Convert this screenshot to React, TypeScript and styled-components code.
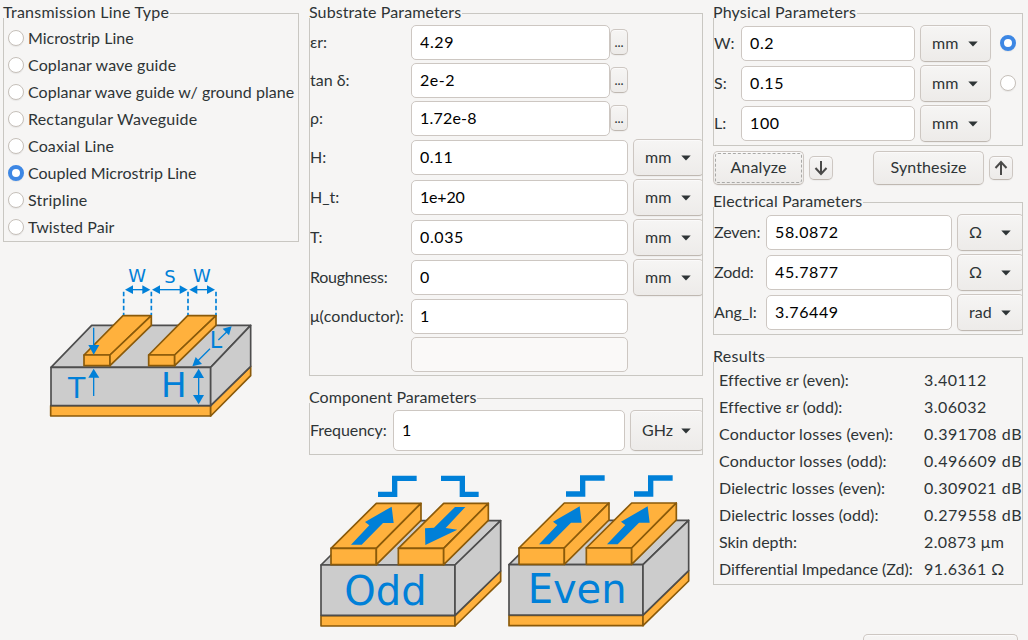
import React from "react";
import styled, { createGlobalStyle, css } from "styled-components";

const Global = createGlobalStyle`
  * { box-sizing: border-box; }
  body {
    margin: 0;
    overflow: hidden;
    background: #f6f5f4;
    color: #2e3436;
    font: 16px/20px Lato, "Noto Sans", sans-serif;
  }
`;

const Page = styled.main`
  display: flex;
  gap: 10px;
  width: 1028px;
  height: 640px;
  padding: 13px 5px 0 3px;
  overflow: hidden;
`;

const Column = styled.div<{ $width: number }>`
  display: flex;
  flex-direction: column;
  flex: none;
  width: ${(p) => p.$width}px;
`;

const Frame = styled.section<{ $height: number; $top?: number }>`
  position: relative;
  flex: none;
  height: ${(p) => p.$height}px;
  margin-top: ${(p) => p.$top ?? 0}px;
  border: 1px solid #c9c7c2;
`;

const FrameTitle = styled.h2<{ $track?: number }>`
  position: absolute;
  top: -12px;
  left: -1px;
  height: 16px;
  margin: 0;
  padding-right: 1px;
  background: #f6f5f4;
  font-size: 16px;
  font-weight: 400;
  line-height: 20px;
  white-space: nowrap;
  letter-spacing: ${(p) => p.$track ?? 0}px;
`;

const FrameBody = styled.div<{ $top?: number }>`
  height: 100%;
  padding-top: ${(p) => p.$top ?? 10}px;
  overflow: hidden;
`;

const Text = styled.span<{ $width?: number; $track?: number }>`
  flex: none;
  width: ${(p) => (p.$width ? `${p.$width}px` : "auto")};
  white-space: nowrap;
  letter-spacing: ${(p) => p.$track ?? 0}px;
`;

const RadioRow = styled.label`
  display: flex;
  align-items: center;
  gap: 4px;
  height: 27px;
  padding-left: 4px;
`;

const Radio = styled.span<{ $on?: boolean }>`
  flex: none;
  width: 16px;
  height: 16px;
  border: 1px solid #c6c0ba;
  border-radius: 50%;
  background: #fff;
  box-shadow: 0 1px 1px rgba(0, 0, 0, 0.06);
  ${(p) =>
    p.$on &&
    css`
      border: 4px solid #3d87e4;
    `}
`;

const FieldRow = styled.div<{ $height: number }>`
  display: flex;
  align-items: center;
  height: ${(p) => p.$height}px;
  padding-bottom: 1px;
  & > ${Text} {
    padding-bottom: 2px;
  }
  & > ${Radio} {
    margin-top: -2px;
  }
`;

const Field = styled.input<{ $width: number; $height?: number; $track?: number }>`
  flex: none;
  width: ${(p) => p.$width}px;
  height: ${(p) => p.$height ?? 35}px;
  padding: 0 8px 2px;
  border: 1px solid #cdc7c2;
  border-radius: 5px;
  outline: none;
  background: #fff;
  color: #000;
  font: inherit;
  letter-spacing: ${(p) => p.$track ?? 0.6}px;
  &:disabled {
    background: #faf9f8;
  }
`;

const raised = css`
  flex: none;
  padding: 0 0 2px;
  border: 1px solid #cdc7c2;
  border-bottom-color: #bfb8b1;
  border-radius: 5px;
  background: linear-gradient(#f6f5f4, #edebe9);
  box-shadow: inset 0 1px #fbfafa, 0 1px 1px rgba(0, 0, 0, 0.04);
  color: #2e3436;
  font: inherit;
`;

const Combo = styled.button<{ $width: number; $height?: number }>`
  ${raised}
  display: flex;
  align-items: center;
  justify-content: space-between;
  width: ${(p) => p.$width}px;
  height: ${(p) => p.$height ?? 37}px;
  margin-left: 5px;
  padding: 0 12px 0 11px;
  & > span {
    padding-bottom: 2px;
  }
`;

const Dots = styled.button`
  ${raised}
  width: 18px;
  height: 26px;
  margin-top: -1px;
  padding: 0;
  font-size: 13px;
`;

const PushButton = styled.button<{ $width: number }>`
  ${raised}
  position: relative;
  width: ${(p) => p.$width}px;
  height: 34px;
  letter-spacing: 0.12px;
`;

const FocusRing = styled.span`
  position: absolute;
  inset: 1px;
  border: 1px dashed #a9a9a7;
  border-radius: 3px;
`;

const IconButton = styled.button`
  ${raised}
  display: grid;
  place-items: center;
  width: 24px;
  height: 24px;
  margin-left: 5px;
  padding: 0;
`;

const Actions = styled.div`
  display: flex;
  align-items: center;
  height: 34px;
  margin-top: 5px;
`;

const Gap = styled.span<{ $width: number }>`
  flex: none;
  width: ${(p) => p.$width}px;
`;

const ResultRow = styled.div`
  display: flex;
  align-items: center;
  height: 27px;
  padding-left: 5px;
`;

const CloseButton = styled.button`
  ${raised}
  width: 155px;
  height: 34px;
  margin: 49px 0 0 150px;
`;

const DrawingBox = styled.svg<{ $left: number; $top: number }>`
  display: block;
  flex: none;
  margin: ${(p) => p.$top}px 0 0 ${(p) => p.$left}px;
  overflow: visible;
  font-family: "DejaVu Sans", sans-serif;
`;

const Caret = () => (
  <svg width="10" height="6" viewBox="0 0 10 6">
    <path d="M0.3 0.6H9.7L5 5.6Z" fill="#2e3436" />
  </svg>
);

const Arrow = ({ up }: { up?: boolean }) => (
  <svg width="14" height="16" viewBox="0 0 14 16" fill="none" stroke="#4a4a49" strokeWidth="2">
    {up ? <path d="M7 15V2M1.5 8L7 2L12.5 8" /> : <path d="M7 1V14M1.5 8L7 14L12.5 8" />}
  </svg>
);

const Unit = ({ name, width = 71, height }: { name: string; width?: number; height?: number }) => (
  <Combo $width={width} $height={height}>
    <span>{name}</span>
    <Caret />
  </Combo>
);

const BLUE = "#0080d8";
const ORANGE = "#ffb13d";
const BROWN = "#8a5a0a";
const GRAY = "#cccccc";
const DARK = "#4d4d4d";

const Arrowed = ({ d, heads }: { d: string; heads: string[] }) => (
  <g>
    <path d={d} stroke={BLUE} strokeWidth="4" fill="none" />
    {heads.map((h) => (
      <path key={h} d={h} fill={BLUE} />
    ))}
  </g>
);

const LineDrawing = () => (
  <DrawingBox $left={37} $top={13} width="220" height="170" viewBox="0 0 660 510">
    <g stroke={BROWN} strokeWidth="5" fill={ORANGE} strokeLinejoin="round">
      <path d="M32 452H512V483H32Z" />
      <path d="M512 452L632 334V362L512 483Z" />
    </g>
    <g stroke={DARK} strokeWidth="5" fill={GRAY} strokeLinejoin="round">
      <path d="M33 337L155 211H632L512 337Z" />
      <path d="M33 337H512V452H33Z" />
      <path d="M512 337L632 211V334L512 452Z" />
    </g>
    {[0, 194].map((x) => (
      <g key={x} transform={`translate(${x} 0)`} stroke={BROWN} strokeWidth="5" fill={ORANGE} strokeLinejoin="round">
        <path d="M132 300L249 182H334L210 300Z" />
        <path d="M132 300H210V332H132Z" />
        <path d="M210 300L334 182V211L210 332Z" />
      </g>
    ))}
    <g stroke={BLUE} strokeWidth="5" strokeDasharray="14 7">
      <path d="M251 110V180M334 110V180M444 110V180M528 110V180" />
    </g>
    <Arrowed d="M270 104H315" heads={["M255 104L279 91V117Z", "M331 104L307 91V117Z"]} />
    <Arrowed d="M350 104H430" heads={["M336 104L360 91V117Z", "M443 104L419 91V117Z"]} />
    <Arrowed d="M460 104H510" heads={["M448 104L472 91V117Z", "M525 104L501 91V117Z"]} />
    <Arrowed d="M161 218V275" heads={["M161 299L145 270H178Z"]} />
    <Arrowed d="M161 423V360" heads={["M161 341L145 368H178Z"]} />
    <Arrowed d="M476 360V430" heads={["M476 341L459 369H492Z", "M476 448L459 420H492Z"]} />
    <Arrowed d="M535 255L563 228M510 281L473 318" heads={["M575 214L548 221L567 241Z", "M457 334L467 306L486 327Z"]} />
    <g fill={BLUE}>
      <text x="265" y="82" fontSize="54">W</text>
      <text x="373" y="85" fontSize="54">S</text>
      <text x="459" y="82" fontSize="54">W</text>
      <text x="84" y="429" fontSize="85">T</text>
      <text x="363" y="427" fontSize="102">H</text>
      <text x="509" y="279" fontSize="67">L</text>
    </g>
  </DrawingBox>
);

const UP_ARROW = "M123 239L178 181L165 171L245 125L251 174L219 174L155 239Z";
const DOWN_ARROW = "M466 126L407 189L442 194L346 240L345 190L372 188L435 126Z";
const STEP_UP = "M204 88H254V40H320";

const ModeBlock = ({ odd }: { odd?: boolean }) => (
  <g>
    <g stroke={BROWN} strokeWidth="5" fill={ORANGE} strokeLinejoin="round">
      <path d="M33 452H435V483H33Z" />
      <path d="M435 452L572 318V349L435 483Z" />
    </g>
    <g stroke={DARK} strokeWidth="5" fill={GRAY} strokeLinejoin="round">
      <path d="M33 300L167 167H572L435 300Z" />
      <path d="M33 300H435V451H33Z" />
      <path d="M435 300L572 167V318L435 451Z" />
    </g>
    {[0, 202].map((x) => (
      <g key={x} transform={`translate(${x} 0)`} stroke={BROWN} strokeWidth="5" fill={ORANGE} strokeLinejoin="round">
        <path d="M63 250L199 115H333L199 250Z" />
        <path d="M63 250H199V299H63Z" />
        <path d="M199 250L333 115V166L199 299Z" />
      </g>
    ))}
    <path d={UP_ARROW} fill={BLUE} />
    <g fill="none" stroke={BLUE} strokeWidth="16">
      <path d={STEP_UP} />
      {odd ? <path d="M393 40H457V88H506" /> : <path d={STEP_UP} transform="translate(204 0)" />}
    </g>
    {odd ? <path d={DOWN_ARROW} fill={BLUE} /> : <path d={UP_ARROW} transform="translate(204 0)" fill={BLUE} />}
    <text x={odd ? 103 : 89} y={odd ? 421 : 414} fontSize="120" fill={BLUE}>
      {odd ? "Odd" : "Even"}
    </text>
  </g>
);

const ModeDrawing = () => (
  <DrawingBox $left={1} $top={10} width="390" height="170" viewBox="0 0 1170 510">
    <ModeBlock odd />
    <g transform="translate(564 -1)">
      <ModeBlock />
    </g>
  </DrawingBox>
);

const lineTypes: [string, number][] = [
  ["Microstrip Line", 0],
  ["Coplanar wave guide", 0.13],
  ["Coplanar wave guide w/ ground plane", 0.04],
  ["Rectangular Waveguide", 0.21],
  ["Coaxial Line", 0.13],
  ["Coupled Microstrip Line", 0],
  ["Stripline", 0.2],
  ["Twisted Pair", 0.08],
];

const substrate: {
  label: string;
  value: string;
  kind: "dots" | "unit" | "plain";
  track?: number;
  valueTrack?: number;
}[] = [
  { label: "εr:", value: "4.29", kind: "dots" },
  { label: "tan δ:", value: "2e-2", kind: "dots", valueTrack: 0.5 },
  { label: "ρ:", value: "1.72e-8", kind: "dots", valueTrack: 0.2 },
  { label: "H:", value: "0.11", kind: "unit", valueTrack: 0.4 },
  { label: "H_t:", value: "1e+20", kind: "unit", valueTrack: -0.2 },
  { label: "T:", value: "0.035", kind: "unit" },
  { label: "Roughness:", value: "0", kind: "unit", track: -0.25 },
  { label: "μ(conductor):", value: "1", kind: "plain" },
  { label: "", value: "", kind: "plain" },
];

const physical = [
  ["W:", "0.2"],
  ["S:", "0.15"],
  ["L:", "100"],
];

const electrical = [
  ["Zeven:", "58.0872", "Ω"],
  ["Zodd:", "45.7877", "Ω"],
  ["Ang_l:", "3.76449", "rad"],
];

const results: [string, string, number, number][] = [
  ["Effective εr (even):", "3.40112", 0.07, 0.48],
  ["Effective εr (odd):", "3.06032", 0.07, 0.48],
  ["Conductor losses (even):", "0.391708 dB", 0.17, 0.55],
  ["Conductor losses (odd):", "0.496609 dB", 0.18, 0.55],
  ["Dielectric losses (even):", "0.309021 dB", 0.13, 0.55],
  ["Dielectric losses (odd):", "0.279558 dB", 0.13, 0.55],
  ["Skin depth:", "2.0873 μm", -0.05, 0.35],
  ["Differential Impedance (Zd):", "91.6361 Ω", -0.05, 0.45],
];

export default function App() {
  return (
    <Page>
      <Global />
      <Column $width={296}>
        <Frame $height={229}>
          <FrameTitle $track={0.25}>Transmission Line Type</FrameTitle>
          <FrameBody>
            {lineTypes.map(([name, track]) => (
              <RadioRow key={name}>
                <Radio $on={name === "Coupled Microstrip Line"} />
                <Text $track={track}>{name}</Text>
              </RadioRow>
            ))}
          </FrameBody>
        </Frame>
        <LineDrawing />
      </Column>

      <Column $width={394}>
        <Frame $height={363}>
          <FrameTitle $track={0.1}>Substrate Parameters</FrameTitle>
          <FrameBody>
            {substrate.map((row) => (
              <FieldRow key={row.label} $height={row.kind === "unit" ? 40 : 38}>
                <Text $width={101} $track={row.track}>{row.label}</Text>
                <Field
                  $width={row.kind === "dots" ? 199 : 217}
                  $track={row.valueTrack}
                  defaultValue={row.value}
                  disabled={!row.label}
                />
                {row.kind === "dots" && <Dots>...</Dots>}
                {row.kind === "unit" && <Unit name="mm" />}
              </FieldRow>
            ))}
          </FrameBody>
        </Frame>
        <Frame $height={57} $top={22}>
          <FrameTitle $track={0.06}>Component Parameters</FrameTitle>
          <FrameBody>
            <FieldRow $height={44}>
              <Text $width={83} $track={-0.08}>Frequency:</Text>
              <Field $width={232} $height={41} defaultValue="1" />
              <Unit name="GHz" width={74} height={41} />
            </FieldRow>
          </FrameBody>
        </Frame>
        <ModeDrawing />
      </Column>

      <Column $width={310}>
        <Frame $height={133}>
          <FrameTitle $track={0.16}>Physical Parameters</FrameTitle>
          <FrameBody>
            {physical.map(([label, value], i) => (
              <FieldRow key={label} $height={40}>
                <Text $width={27}>{label}</Text>
                <Field $width={174} defaultValue={value} />
                <Unit name="mm" />
                <Gap $width={9} />
                {i < 2 && <Radio $on={i === 0} />}
              </FieldRow>
            ))}
          </FrameBody>
        </Frame>
        <Actions>
          <PushButton $width={91}>
            <FocusRing />
            Analyze
          </PushButton>
          <IconButton aria-label="Analyze down">
            <Arrow />
          </IconButton>
          <Gap $width={40} />
          <PushButton $width={111}>Synthesize</PushButton>
          <IconButton aria-label="Synthesize up">
            <Arrow up />
          </IconButton>
        </Actions>
        <Frame $height={133} $top={17}>
          <FrameTitle $track={0.1}>Electrical Parameters</FrameTitle>
          <FrameBody>
            {electrical.map(([label, value, unit]) => (
              <FieldRow key={label} $height={40}>
                <Text $width={52} $track={-0.1}>{label}</Text>
                <Field $width={186} defaultValue={value} />
                <Unit name={unit} width={67} />
              </FieldRow>
            ))}
          </FrameBody>
        </Frame>
        <Frame $height={228} $top={22}>
          <FrameTitle $track={0.3}>Results</FrameTitle>
          <FrameBody $top={8}>
            {results.map(([label, value, lt, vt]) => (
              <ResultRow key={label}>
                <Text $width={205} $track={lt}>{label}</Text>
                <Text $track={vt}>{value}</Text>
              </ResultRow>
            ))}
          </FrameBody>
        </Frame>
        <CloseButton aria-label="Close" />
      </Column>
    </Page>
  );
}
